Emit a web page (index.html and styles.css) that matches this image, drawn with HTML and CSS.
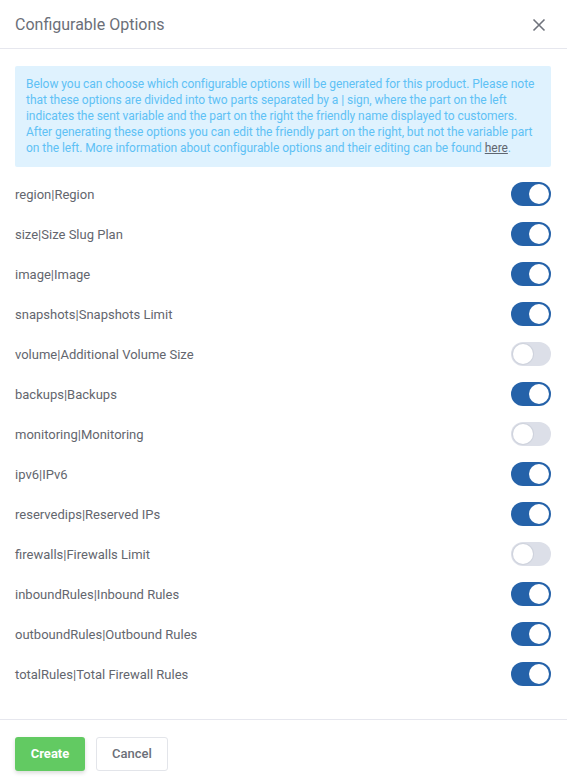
FILE: index.html
```html
<!DOCTYPE html>
<html>
<head>
<meta charset="utf-8">
<link rel="stylesheet" href="styles.css">
</head>
<body>
<div class="modal">
  <div class="header">
    <div class="title">Configurable Options</div>
    <button class="close" aria-label="Close">
      <svg width="14" height="14" viewBox="0 0 14 14"><path d="M1.5 1.5L12.5 12.5M12.5 1.5L1.5 12.5" stroke="#6f737c" stroke-width="1.6" fill="none"/></svg>
    </button>
  </div>
  <div class="body">
    <div class="alert">Below you can choose which configurable options will be generated for this product. Please note that these options are divided into two parts separated by a | sign, where the part on the left indicates the sent variable and the part on the right the friendly name displayed to customers. After generating these options you can edit the friendly part on the right, but not the variable part on the left. More information about configurable options and their editing can be found <a href="#">here</a>.</div>
    <div class="list">
      <div class="row"><span>region|Region</span><span class="toggle on"></span></div>
      <div class="row"><span>size|Size Slug Plan</span><span class="toggle on"></span></div>
      <div class="row"><span>image|Image</span><span class="toggle on"></span></div>
      <div class="row"><span>snapshots|Snapshots Limit</span><span class="toggle on"></span></div>
      <div class="row"><span>volume|Additional Volume Size</span><span class="toggle"></span></div>
      <div class="row"><span>backups|Backups</span><span class="toggle on"></span></div>
      <div class="row"><span>monitoring|Monitoring</span><span class="toggle"></span></div>
      <div class="row"><span>ipv6|IPv6</span><span class="toggle on"></span></div>
      <div class="row"><span>reservedips|Reserved IPs</span><span class="toggle on"></span></div>
      <div class="row"><span>firewalls|Firewalls Limit</span><span class="toggle"></span></div>
      <div class="row"><span>inboundRules|Inbound Rules</span><span class="toggle on"></span></div>
      <div class="row"><span>outboundRules|Outbound Rules</span><span class="toggle on"></span></div>
      <div class="row"><span>totalRules|Total Firewall Rules</span><span class="toggle on"></span></div>
    </div>
  </div>
  <div class="footer">
    <button class="btn btn-create">Create</button>
    <button class="btn btn-cancel">Cancel</button>
  </div>
</div>
</body>
</html>
```
FILE: styles.css
```css
* { box-sizing: border-box; }
html, body { margin: 0; padding: 0; background: #fff; }
body { font-family: Roboto, "Liberation Sans", Arial, sans-serif; width: 567px; height: 784px; overflow: hidden; }
.modal { width: 567px; }
.header {
  height: 49px;
  border-bottom: 1px solid #e6e7ee;
  display: flex;
  align-items: center;
  justify-content: space-between;
  padding: 0 21px 0 15px;
}
.title { font-size: 16px; color: #6b6f78; padding-top: 1px; }
.close { border: 0; background: none; padding: 0; width: 14px; height: 14px; display: flex; margin-top: 1px; }
.body { padding: 17px 16px 25px 15px; }
.alert {
  background: #dff2fe;
  color: #5ec1f5;
  font-size: 12px;
  line-height: 16px;
  padding: 10px 10px 11px 11px;
  border-radius: 2px;
  letter-spacing: -0.05px;
}
.alert a { color: #5f6670; text-decoration: underline; }
.list { margin-top: 7px; }
.row {
  height: 40px;
  display: flex;
  align-items: center;
  justify-content: space-between;
  font-size: 13px;
  color: #63666e;
}
.toggle {
  width: 40px;
  height: 24px;
  border-radius: 12px;
  background: #dcdfe8;
  position: relative;
}
.toggle::after {
  content: "";
  position: absolute;
  top: 2px;
  left: 2px;
  width: 20px;
  height: 20px;
  border-radius: 50%;
  background: #fff;
  box-shadow: 0 0 0 1px #cfd3dd;
}
.toggle.on { background: #2562a9; }
.toggle.on::after { left: 18px; box-shadow: none; }
.footer {
  border-top: 1px solid #e6e7ee;
  padding: 17px 15px;
  display: flex;
  gap: 11px;
}
.btn {
  height: 34px;
  border-radius: 3px;
  font-family: Roboto, "Liberation Sans", Arial, sans-serif;
  font-size: 13px;
  padding: 0 0 1px;
  cursor: pointer;
}
.btn-create {
  width: 70px;
  background: #62ca62;
  color: #fff;
  font-weight: bold;
  border: 0;
  box-shadow: 0 2px 4px rgba(0,0,0,0.15);
}
.btn-cancel {
  width: 72px;
  background: #fff;
  color: #6b6f78;
  border: 1px solid #e3e5ea;
  font-weight: 500;
}
```
